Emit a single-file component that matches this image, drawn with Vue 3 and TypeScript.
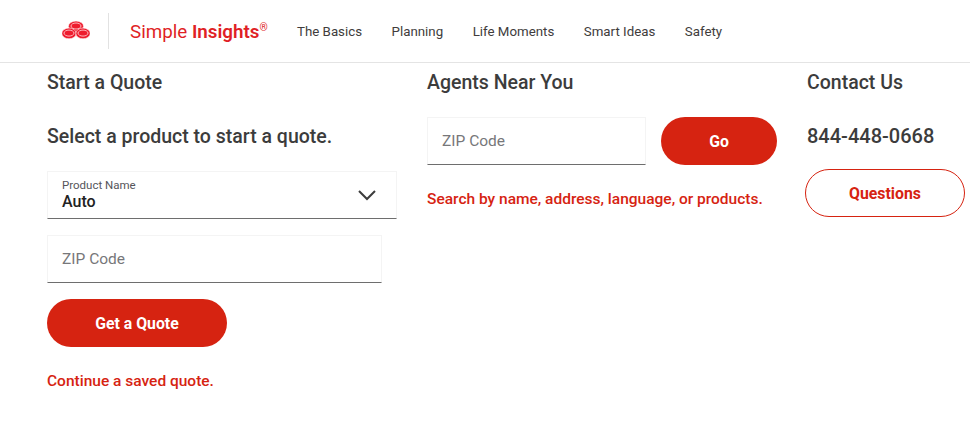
<script setup lang="ts">
const navItems = ['The Basics', 'Planning', 'Life Moments', 'Smart Ideas', 'Safety']
</script>

<template>
  <div class="page">
    <header class="topbar">
      <svg class="logo" viewBox="0 0 28 18" width="28" height="18" aria-hidden="true">
        <g fill="#ee1c2e" stroke="#fff" stroke-width="0.6">
          <ellipse cx="14" cy="5.4" rx="7.6" ry="5.4" />
          <ellipse cx="7" cy="12.4" rx="7.2" ry="5.4" />
          <ellipse cx="21" cy="12.4" rx="7.2" ry="5.4" />
        </g>
        <g fill="none" stroke="#ffc4c9" stroke-width="0.9">
          <ellipse cx="14" cy="5" rx="5" ry="3" />
          <ellipse cx="7" cy="12.1" rx="5" ry="3" />
          <ellipse cx="21" cy="12.1" rx="5" ry="3" />
        </g>
      </svg>
      <span class="divider"></span>
      <div class="brand">Simple <b>Insights</b><sup>®</sup></div>
      <nav class="nav">
        <a v-for="item in navItems" :key="item">{{ item }}</a>
      </nav>
    </header>

    <main class="cols">
      <section class="col col-quote">
        <h2>Start a Quote</h2>
        <p class="lead">Select a product to start a quote.</p>
        <div class="field select">
          <div>
            <div class="small-label">Product Name</div>
            <div class="value">Auto</div>
          </div>
          <svg class="chevron" viewBox="0 0 20 12" width="20" height="12" aria-hidden="true">
            <path d="M2 2l8 8 8-8" fill="none" stroke="#3c3c3c" stroke-width="2" />
          </svg>
        </div>
        <div class="field zip">ZIP Code</div>
        <button class="btn solid quote-btn">Get a Quote</button>
        <a class="link saved">Continue a saved quote.</a>
      </section>

      <section class="col col-agents">
        <h2>Agents Near You</h2>
        <div class="agent-row">
          <div class="field agent-zip">ZIP Code</div>
          <button class="btn solid go-btn">Go</button>
        </div>
        <a class="link search">Search by name, address, language, or products.</a>
      </section>

      <section class="col col-contact">
        <h2>Contact Us</h2>
        <div class="phone">844-448-0668</div>
        <button class="btn outline">Questions</button>
      </section>
    </main>
  </div>
</template>

<style>
html,
body {
  margin: 0;
  background: #fff;
  overflow: hidden;
}
</style>

<style scoped>
.page {
  width: 970px;
  height: 426px;
  font-family: Roboto, 'Liberation Sans', sans-serif;
  color: #3c3c3c;
  overflow: hidden;
}

.topbar {
  display: flex;
  align-items: center;
  height: 62px;
  padding-left: 62px;
  border-bottom: 1px solid #e4e4e4;
}

.logo {
  flex: none;
  margin-top: -3px;
}

.divider {
  width: 1px;
  height: 36px;
  margin: 0 21px 0 18px;
  background: #e2e2e2;
}

.brand {
  width: 167px;
  margin-top: 2px;
  font-size: 18.8px;
  color: #e01f26;
  white-space: nowrap;
}

.brand b {
  font-weight: 600;
}

.brand sup {
  font-size: 10.5px;
  line-height: 0;
}

.nav {
  display: flex;
  gap: 29.5px;
  font-size: 13.3px;
  color: #403c3c;
}

.cols {
  display: flex;
  padding-left: 47px;
}

.col-quote,
.col-agents {
  width: 380px;
}

h2 {
  margin: 0;
  padding-top: 8px;
  font-size: 19.5px;
  line-height: 24px;
  font-weight: 500;
}

.lead {
  margin: 30px 0 22px;
  font-size: 19.5px;
  line-height: 24px;
  font-weight: 500;
}

.field {
  box-sizing: border-box;
  display: flex;
  align-items: center;
  border: 1px solid #f4f4f4;
  border-bottom: 1px solid #6e6e6e;
  padding-left: 14px;
  font-size: 15.5px;
  color: #77777a;
}

.select {
  justify-content: space-between;
  width: 350px;
  height: 48px;
  padding-right: 19px;
}

.small-label {
  font-size: 11.5px;
  line-height: 13px;
  color: #55555a;
}

.value {
  font-size: 16px;
  line-height: 19px;
  font-weight: 500;
  color: #222;
}

.zip {
  width: 335px;
  height: 48px;
  margin-top: 16px;
}

.btn {
  display: block;
  box-sizing: border-box;
  border-radius: 24px;
  font-family: inherit;
  font-size: 15.8px;
  font-weight: 700;
  height: 48px;
  padding: 0;
  cursor: pointer;
}

.solid {
  background: #d62311;
  border: 0;
  color: #fff;
}

.quote-btn {
  width: 180px;
  margin-top: 16px;
}

.link {
  display: block;
  font-size: 15.5px;
  line-height: 20px;
  font-weight: 500;
  color: #d62311;
}

.saved {
  margin-top: 24px;
}

.agent-row {
  display: flex;
  gap: 15px;
  margin-top: 22px;
}

.agent-zip {
  width: 219px;
  height: 48px;
}

.go-btn {
  width: 116px;
}

.search {
  margin-top: 24px;
}

.phone {
  margin-top: 29px;
  font-size: 20px;
  line-height: 24px;
  font-weight: 500;
}

.outline {
  width: 160px;
  margin: 21px 0 0 -2px;
  background: #fff;
  border: 1px solid #d62311;
  color: #d62311;
}
</style>
